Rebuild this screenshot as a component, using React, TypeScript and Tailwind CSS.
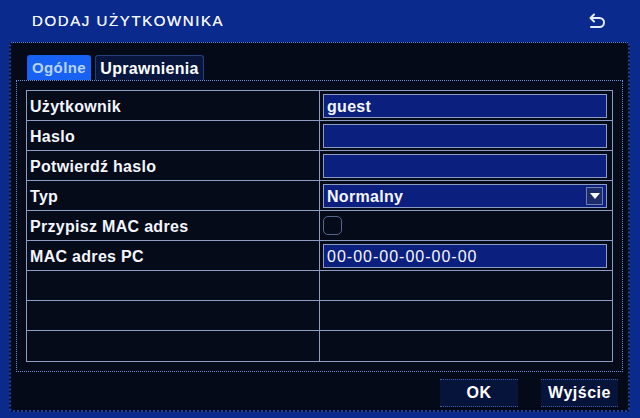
import React from "react";

const font = { fontFamily: '"Liberation Sans", Arial, sans-serif' };

function Input({ value, dropdown, mono }: { value?: string; dropdown?: boolean; mono?: boolean }) {
  return (
    <div
      className={`relative flex h-[24px] w-[284px] items-center border border-[#8d9cc2] bg-[#0b1f7e] pl-[3px] pt-[2px] text-[16px] text-[#f4f6ff] ${
        mono ? "font-normal tracking-[1px]" : "font-bold tracking-[0.3px]"
      }`}
    >
      {value}
      {dropdown && (
        <div className="absolute right-[3px] top-[2px] flex h-[18px] w-[17px] items-center justify-center border border-[#6d7fae] bg-[#1b2c68]">
          <svg width="10" height="6" viewBox="0 0 10 6">
            <path d="M0 0 H10 L5 6 Z" fill="#ffffff" />
          </svg>
        </div>
      )}
    </div>
  );
}

type Row = { label: string; kind: "input" | "dropdown" | "check" | "none"; value?: string; mono?: boolean };

const rows: Row[] = [
  { label: "Użytkownik", kind: "input", value: "guest" },
  { label: "Haslo", kind: "input" },
  { label: "Potwierdź haslo", kind: "input" },
  { label: "Typ", kind: "dropdown", value: "Normalny" },
  { label: "Przypisz MAC adres", kind: "check" },
  { label: "MAC adres PC", kind: "input", value: "00-00-00-00-00-00", mono: true },
  { label: "", kind: "none" },
  { label: "", kind: "none" },
  { label: "", kind: "none" },
];

export default function App() {
  return (
    <div
      className="flex h-[418px] w-[640px] flex-col overflow-hidden bg-[#0a2a8e] text-white"
      style={font}
    >
      {/* Title bar */}
      <div className="flex h-[42px] shrink-0 items-center justify-between pl-[32px] pr-[34px]">
        <div className="text-[15px] tracking-[1.6px] text-[#eef2ff] [text-shadow:0_0_0.6px_#ffffff]">DODAJ UŻYTKOWNIKA</div>
        <svg width="18" height="16" viewBox="0 0 18 16" fill="none">
          <path d="M6 1.5 L2.5 5 L6 8.5" stroke="#e6ecff" strokeWidth="2" strokeLinecap="round" strokeLinejoin="round" />
          <path d="M3 5 H11.5 A4.5 4.5 0 0 1 11.5 14 H3" stroke="#e6ecff" strokeWidth="2" strokeLinecap="round" />
        </svg>
      </div>

      {/* Main panel */}
      <div className="mb-[6px] ml-[9px] mr-[10px] flex flex-1 flex-col rounded-[4px] border-t border-dotted border-t-[#5f86e6] border-x-[#1c44b0] border-x-2 border-b-2 border-b-[#1c44b0] bg-[#040a18]">
        {/* Tabs */}
        <div className="ml-[16px] mt-[12px] flex h-[25px] gap-[4px]">
          <div className="flex w-[64px] items-center justify-center rounded-t-[3px] bg-[#1762f2] pt-[1px] text-[15px] font-bold tracking-[0.4px] text-[#b9d2ff]">
            Ogólne
          </div>
          <div className="flex w-[109px] items-center justify-center rounded-t-[3px] border border-b-0 border-[#23407e] bg-[#08163e] pt-[1px] text-[16px] font-bold tracking-[0.3px] text-white">
            Uprawnienia
          </div>
        </div>

        {/* Content frame */}
        <div className="ml-[5px] mr-[5px] border border-dotted border-[#6d8fd8] bg-[#050b18] p-[9px]">
          <div className="border border-[#8d9cc2]">
            {rows.map((r, i) => (
              <div
                key={i}
                className={`flex h-[30px] ${i < rows.length - 1 ? "border-b border-[#8d9cc2]" : ""}`}
              >
                <div className="flex w-[293px] items-center border-r border-[#8d9cc2] pl-[3px] pt-[2px] text-[16px] font-bold tracking-[0.3px] text-[#f4f6ff]">
                  {r.label}
                </div>
                <div className="flex flex-1 items-center pl-[3px]">
                  {r.kind === "input" && <Input value={r.value} mono={r.mono} />}
                  {r.kind === "dropdown" && <Input value={r.value} dropdown />}
                  {r.kind === "check" && (
                    <div className="h-[19px] w-[19px] rounded-[5px] border border-[#56668f]" />
                  )}
                </div>
              </div>
            ))}
          </div>
        </div>

        {/* Buttons */}
        <div className="mr-[10px] mt-[7px] flex justify-end gap-[23px]">
          <div className="flex h-[28px] w-[78px] items-center justify-center border-y border-dotted border-[#3c5fae] bg-[#06143c] text-[16px] font-bold tracking-[0.5px] text-white">
            OK
          </div>
          <div className="flex h-[28px] w-[77px] items-center justify-center border-y border-dotted border-[#3c5fae] bg-[#06143c] text-[16px] font-bold tracking-[0.5px] text-white">
            Wyjście
          </div>
        </div>
      </div>
    </div>
  );
}
